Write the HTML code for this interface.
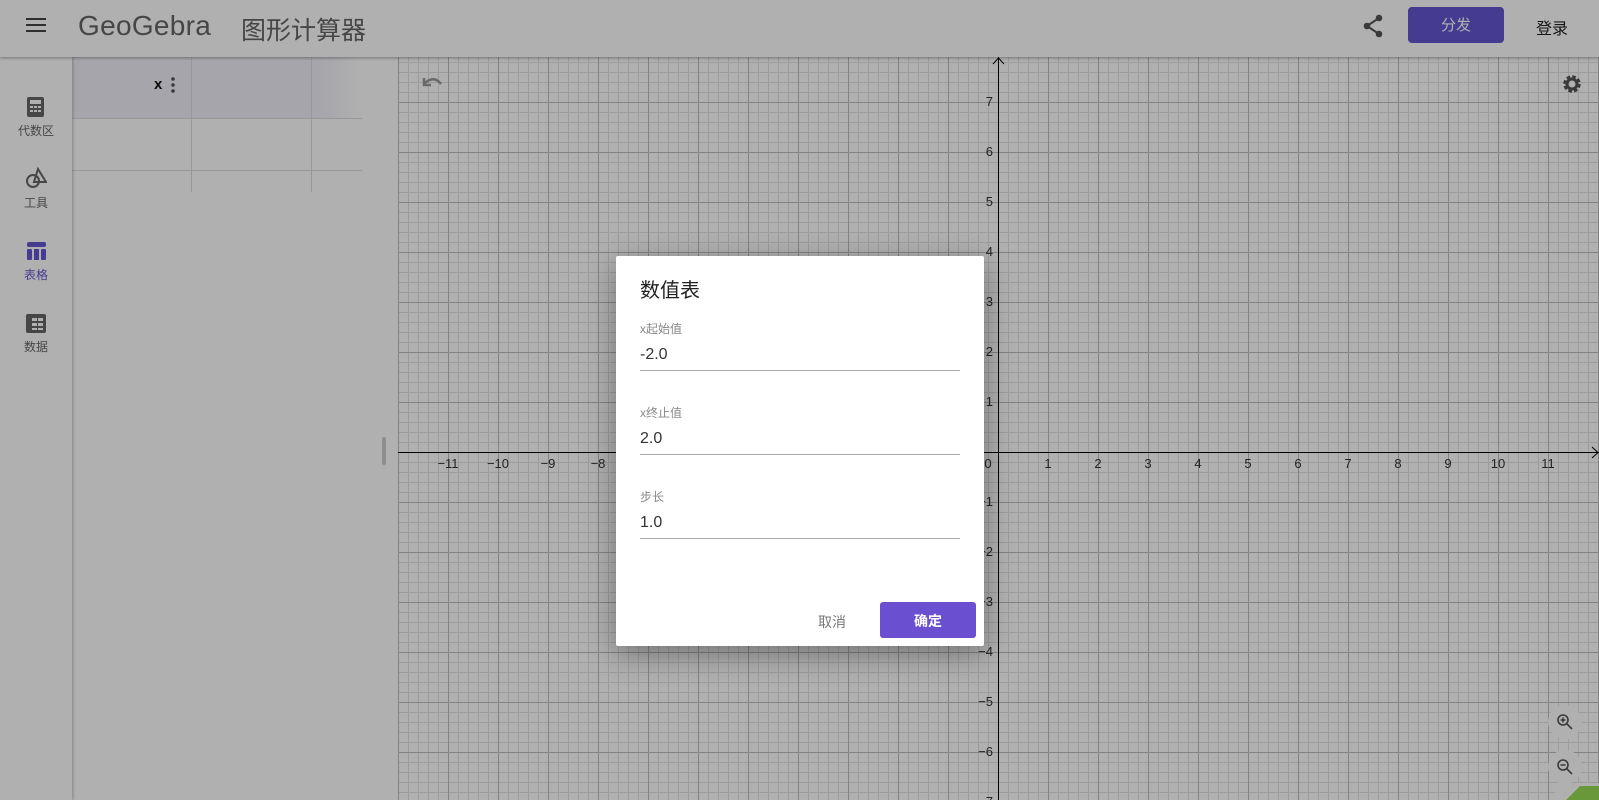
<!DOCTYPE html>
<html><head><meta charset="utf-8"><style>
*{margin:0;padding:0;box-sizing:border-box}
body{width:1599px;height:800px;overflow:hidden;background:#fff;font-family:"Liberation Sans","Noto Sans CJK SC",sans-serif;position:relative}
.abs{position:absolute}
#hdr{left:0;top:0;width:1599px;height:57px;background:#fff;box-shadow:0 1px 3px rgba(0,0,0,.35);z-index:3}
#side{left:0;top:57px;width:72px;height:743px;background:#fff;box-shadow:1px 0 3px rgba(0,0,0,.25);z-index:2}
.nav{position:absolute;left:0;width:72px;text-align:center;font-size:12px;color:#666}
#panel{left:72px;top:57px;width:326px;height:743px;background:#fff}
#ov{left:0;top:0;width:1599px;height:800px;background:rgba(0,0,0,.31);z-index:5}
#dlg{left:616px;top:256px;width:368px;height:390px;background:#fff;border-radius:2px;box-shadow:0 8px 30px rgba(0,0,0,.35);z-index:6}
.lab{position:absolute;left:24px;font-size:12px;color:#888}
.val{position:absolute;left:24px;font-size:16px;color:#333}
.ln{position:absolute;left:24px;width:320px;height:1px;background:#aaa}
</style></head><body>
<div id="hdr" class="abs">
 <svg class="abs" style="left:26px;top:17px" width="20" height="16"><rect y="1" width="20" height="2" fill="#444"/><rect y="7" width="20" height="2" fill="#444"/><rect y="13" width="20" height="2" fill="#444"/></svg>
 <div class="abs" style="left:78px;top:10px;font-size:28px;color:#666;letter-spacing:0.3px">GeoGebra</div>
 <div class="abs" style="left:241px;top:11px;font-size:25px;color:#666">图形计算器</div>
 <svg class="abs" style="left:1362px;top:14px" width="22" height="24" viewBox="0 0 22 24"><circle cx="17" cy="4" r="3.3" fill="#555"/><circle cx="5" cy="12" r="3.3" fill="#555"/><circle cx="17" cy="20" r="3.3" fill="#555"/><path d="M17 4L5 12L17 20" stroke="#555" stroke-width="2" fill="none"/></svg>
 <div class="abs" style="left:1408px;top:7px;width:96px;height:36px;background:#6557d2;border-radius:4px;color:#fff;font-size:15px;text-align:center;line-height:38px">分发</div>
 <div class="abs" style="left:1536px;top:15px;font-size:16px;color:#222">登录</div>
</div>
<div id="side" class="abs">
 <svg class="abs" style="left:27px;top:40px" width="17" height="20"><rect width="17" height="20" rx="2" fill="#666"/><rect x="3" y="3" width="11" height="4" fill="#fff"/><g fill="#fff"><rect x="3" y="9" width="3" height="2"/><rect x="7" y="9" width="3" height="2"/><rect x="11" y="9" width="3" height="2"/><rect x="3" y="13" width="3" height="2"/><rect x="7" y="13" width="3" height="2"/><rect x="11" y="13" width="3" height="2"/></g></svg>
 <div class="nav" style="top:65px">代数区</div>
 <svg class="abs" style="left:25px;top:110px" width="22" height="22"><path d="M13 2L21 15H9Z" fill="none" stroke="#666" stroke-width="2"/><circle cx="8" cy="14" r="6" fill="none" stroke="#666" stroke-width="2"/></svg>
 <div class="nav" style="top:137px">工具</div>
 <svg class="abs" style="left:27px;top:185px" width="19" height="18"><rect width="19" height="5" rx="2" fill="#6557d2"/><rect y="7" width="5" height="11" rx="1" fill="#6557d2"/><rect x="7" y="7" width="5" height="11" fill="#6557d2"/><rect x="14" y="7" width="5" height="11" rx="1" fill="#6557d2"/></svg>
 <div class="nav" style="top:209px;color:#6557d2">表格</div>
 <svg class="abs" style="left:26px;top:257px" width="20" height="19"><rect width="20" height="19" rx="2" fill="#666"/><g fill="#fff"><rect x="6" y="4" width="5" height="3"/><rect x="12" y="4" width="5" height="3"/><rect x="6" y="9" width="5" height="3"/><rect x="12" y="9" width="5" height="3"/><rect x="6" y="14" width="5" height="2"/><rect x="12" y="14" width="5" height="2"/></g></svg>
 <div class="nav" style="top:281px">数据</div>
</div>
<div id="panel" class="abs">
 <div class="abs" style="left:0;top:0;width:290px;height:61px;background:linear-gradient(90deg,#f0f0f8 85%,rgba(240,240,248,0))"></div>
 <div class="abs" style="left:0;top:61px;width:290px;height:1px;background:#ddd"></div>
 <div class="abs" style="left:0;top:113px;width:290px;height:1px;background:#ddd"></div>
 <div class="abs" style="left:119px;top:0;width:1px;height:135px;background:#ddd"></div>
 <div class="abs" style="left:239px;top:0;width:1px;height:135px;background:#ddd"></div>
 <div class="abs" style="left:82px;top:19px;font-size:15px;font-weight:bold;color:#111">x</div>
 <svg class="abs" style="left:99px;top:20px" width="4" height="16"><circle cx="2" cy="2" r="1.8" fill="#555"/><circle cx="2" cy="8" r="1.8" fill="#555"/><circle cx="2" cy="14" r="1.8" fill="#555"/></svg>
 <div class="abs" style="left:310px;top:380px;width:4px;height:28px;border-radius:2px;background:#ccc"></div>
</div>
<svg class="abs" style="left:398px;top:57px" width="1201" height="743">
 <defs>
  <pattern id="mn" x="0" y="5" width="10" height="10" patternUnits="userSpaceOnUse"><path d="M0 0V10M0 0H10" stroke="#e2e2e2" stroke-width="1" fill="none" transform="translate(0.5,0.5)"/></pattern>
  <pattern id="mj" x="0" y="45" width="50" height="50" patternUnits="userSpaceOnUse"><path d="M0 0V50M0 0H50" stroke="#bdbdbd" stroke-width="1" fill="none" transform="translate(0.5,0.5)"/></pattern>
 </defs>
 <rect width="1201" height="743" fill="#fff"/>
 <rect width="1201" height="743" fill="url(#mn)"/>
 <rect width="1201" height="743" fill="url(#mj)"/>
 <line x1="0" y1="395.5" x2="1201" y2="395.5" stroke="#000"/>
 <line x1="600.5" y1="0" x2="600.5" y2="743" stroke="#000"/>
 <path d="M595 7L600.5 1L606 7M1194 390L1200 395.5L1194 401" stroke="#000" fill="none"/>
 <g font-size="13" fill="#333" font-family="Liberation Sans" text-anchor="middle">
  <text x="50" y="411">−11</text><text x="100" y="411">−10</text><text x="150" y="411">−9</text><text x="200" y="411">−8</text><text x="250" y="411">−7</text><text x="300" y="411">−6</text><text x="350" y="411">−5</text><text x="400" y="411">−4</text><text x="450" y="411">−3</text><text x="500" y="411">−2</text><text x="550" y="411">−1</text>
  <text x="590" y="411">0</text>
  <text x="650" y="411">1</text><text x="700" y="411">2</text><text x="750" y="411">3</text><text x="800" y="411">4</text><text x="850" y="411">5</text><text x="900" y="411">6</text><text x="950" y="411">7</text><text x="1000" y="411">8</text><text x="1050" y="411">9</text><text x="1100" y="411">10</text><text x="1150" y="411">11</text>
 </g>
 <g font-size="13" fill="#333" font-family="Liberation Sans" text-anchor="end">
  <text x="595" y="49">7</text><text x="595" y="99">6</text><text x="595" y="149">5</text><text x="595" y="199">4</text><text x="595" y="249">3</text><text x="595" y="299">2</text><text x="595" y="349">1</text>
  <text x="595" y="449">−1</text><text x="595" y="499">−2</text><text x="595" y="549">−3</text><text x="595" y="599">−4</text><text x="595" y="649">−5</text><text x="595" y="699">−6</text><text x="595" y="749">−7</text>
 </g>
 <path d="M27 26Q36 18 43 27M26 21V28H33" stroke="#999" stroke-width="2.5" fill="none"/>
 <g transform="translate(1174,27)"><circle r="6.5" fill="none" stroke="#555" stroke-width="4.5" stroke-dasharray="3.2 1.9"/><circle r="5" fill="none" stroke="#555" stroke-width="3"/><circle r="2.5" fill="#fff"/></g>
 <circle cx="1167" cy="665" r="17" fill="#fff"/><circle cx="1167" cy="710" r="17" fill="#fff"/>
 <g stroke="#555" stroke-width="1.6" fill="none"><circle cx="1165" cy="663" r="5"/><path d="M1169 667l5 5M1162.5 663h5M1165 660.5v5"/><circle cx="1165" cy="708" r="5"/><path d="M1169 712l5 5M1162.5 708h5"/></g>
 <rect x="1157" y="726" width="44" height="17" fill="#fff"/>
 <path d="M1168 743L1182 729H1201V743Z" fill="#99dd55"/>
</svg>
<div id="ov" class="abs"></div>
<div id="dlg" class="abs">
 <div class="abs" style="left:24px;top:18px;font-size:20px;color:#222">数值表</div>
 <div class="lab" style="top:64px">x起始值</div><div class="val" style="top:90px">-2.0</div><div class="ln" style="top:114px"></div>
 <div class="lab" style="top:148px">x终止值</div><div class="val" style="top:174px">2.0</div><div class="ln" style="top:198px"></div>
 <div class="lab" style="top:232px">步长</div><div class="val" style="top:258px">1.0</div><div class="ln" style="top:282px"></div>
 <div class="abs" style="left:202px;top:356px;font-size:14px;color:#777">取消</div>
 <div class="abs" style="left:264px;top:346px;width:96px;height:36px;background:#6a4fd0;border-radius:3px;color:#fff;font-size:14px;font-weight:bold;text-align:center;line-height:38px">确定</div>
</div>
</body></html>
